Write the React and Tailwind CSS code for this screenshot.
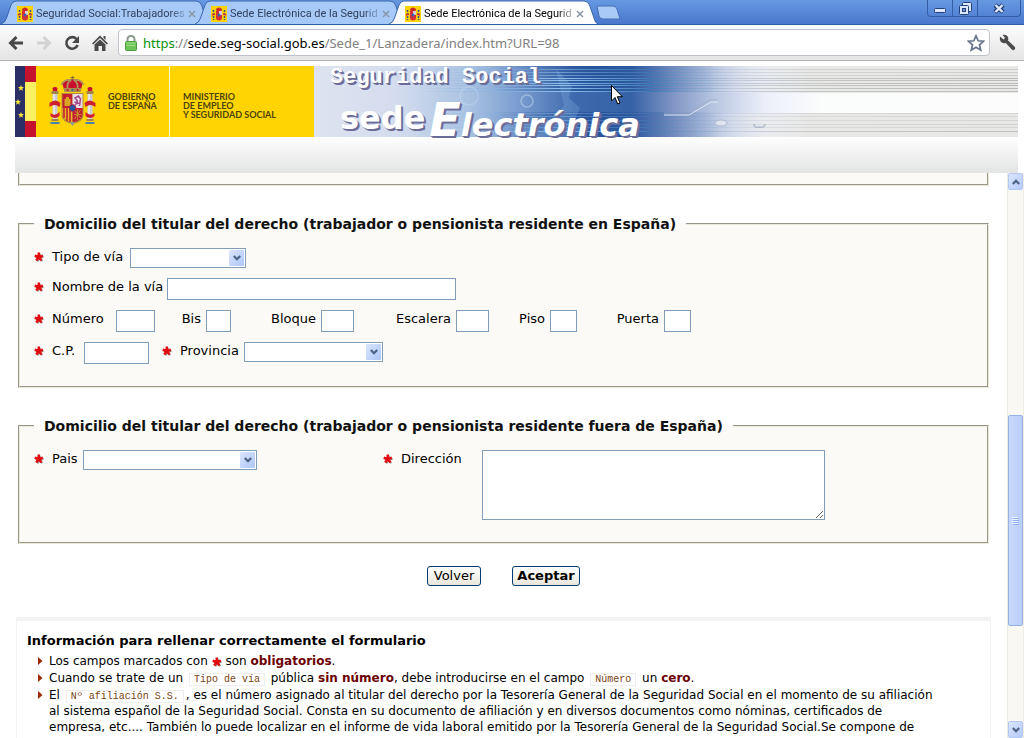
import React from "react";

const Crest = ({ className }) => (
  <svg viewBox="0 0 46 50" className={className} aria-hidden="true">
    <path d="M13 8 Q15 3 23 3 Q31 3 33 8 L31 15 H15 Z" fill="#c8102e" />
    <path d="M12 9 Q14 3 22 4 M34 9 Q32 3 24 4 M18 13 Q17 6 22 4 M28 13 Q29 6 24 4" fill="none" stroke="#b0935a" strokeWidth="1.8" />
    <path d="M14 12 H32 L31 16 H15 Z" fill="#a98a4f" />
    <path d="M23 0 V4 M21 1.6 H25" stroke="#8d7340" strokeWidth="1.2" />
    <circle cx="18" cy="14" r="1" fill="#c8102e" />
    <circle cx="23" cy="14" r="1" fill="#2b5fa8" />
    <circle cx="28" cy="14" r="1" fill="#c8102e" />
    <g>
      <path d="M3 18 H8 V44 H3 Z M38 18 H43 V44 H38 Z" fill="#c9ccd4" />
      <path d="M4.500 18 V44 M39.500 18 V44" stroke="#f4f4f6" strokeWidth="1.200" />
      <path d="M2 15 H9 V18 H2 Z M37 15 H44 V18 H37 Z M2 43 H9 V45 H2 Z M37 43 H44 V45 H37 Z" fill="#a58445" />
      <path d="M3 12 Q5.500 10 8 12 L7.500 15 H3.500 Z M38 12 Q40.500 10 43 12 L42.500 15 H38.500 Z" fill="#c8102e" />
      <path d="M1 46 H10 V48 H1 Z M36 46 H45 V48 H36 Z" fill="#4f7fae" />
      <path d="M0 27 Q6 22 11 27 L10 31 Q5 27 0 31 Z M46 27 Q40 22 35 27 L36 31 Q41 27 46 31 Z M1 37 Q5 41 10 36 L10 40 Q5 44 1 40 Z M45 37 Q41 41 36 36 L36 40 Q41 44 45 40 Z" fill="#d0202e" />
    </g>
    <path d="M12 17 H34 V39 Q34 46 23 48 Q12 46 12 39 Z" fill="#b48b3c" />
    <path d="M13 18 H23 V32 H13 Z" fill="#c41e32" />
    <path d="M15 30 V23 H16.500 V21 H19.500 V23 H21 V30 Z" fill="#d9a520" />
    <path d="M23 18 H33 V32 H23 Z" fill="#e6dfe6" />
    <path d="M26 29 L28 25 L25.500 22 L29 20 L31 23 L30 30 M25 26 L31 28" fill="none" stroke="#a5468c" strokeWidth="1.500" />
    <path d="M13 32 H23 V46.500 Q13 44.500 13 38 Z" fill="#e9bb1f" />
    <path d="M14.500 32 V42 M17.500 32 V45 M20.500 32 V46" stroke="#c41e32" strokeWidth="1.600" />
    <path d="M23 32 H33 V38 Q33 44.500 23 46.500 Z" fill="#c41e32" />
    <path d="M25 34 L31 42 M31 34 L25 43 M28 33 V44 M24.500 38.500 H32" stroke="#c99a2a" strokeWidth="0.800" />
    <circle cx="23" cy="32" r="3.400" fill="#2453a0" stroke="#c41e32" strokeWidth="0.900" />
    <path d="M20 46 H26 L23 50 Z" fill="#8f9c8a" />
  </svg>
);

const Favicon = () => (
  <svg viewBox="0 0 16 16" className="size-4 shrink-0" aria-hidden="true">
    <rect width="16" height="16" fill="#fdd306" />
    <path d="M5 3 Q8 0 11 3 L10.500 5 H5.500 Z" fill="#c8282e" />
    <path d="M5 5 H11 V12 Q11 14 8 14.500 Q5 14 5 12 Z" fill="#d4313a" />
    <path d="M8 5 H11 V9 H8 Z" fill="#d8cfd8" />
    <circle cx="8" cy="9" r="1.500" fill="#3a62a8" />
    <path d="M2.500 4 V14 M13.500 4 V14" stroke="#45507a" strokeWidth="1.500" strokeDasharray="2 1" />
    <path d="M1 9 L4 8 M12 8 L15 9" stroke="#d4313a" strokeWidth="1.500" />
  </svg>
);

function Tab({ title, active, last }) {
  return (
    <div className={`relative flex h-6 w-[209px] items-center pt-1 pr-[14px] pl-4 ${active ? "z-10" : ""} ${last ? "" : "-mr-[15px]"}`}>
      <svg viewBox="0 0 209 24" className="absolute inset-0 size-full" aria-hidden="true">
        <path
          d="M0 24 Q4 23 5.500 18 L10 5 Q11.500 1 15 1 H195 Q199 1 200.500 5 L205 18 Q206 23 209 24"
          fill={active ? "#fdfdfd" : "#a6c9f8"}
          stroke="#3a66ad"
          strokeWidth="1"
        />
      </svg>
      <button
        className={`relative flex min-w-0 grow items-center gap-[3px] font-['Roboto',sans-serif] text-[11px] leading-4 ${active ? "text-black" : "text-[#33415c]"}`}
      >
        <Favicon />
        <span className="whitespace-nowrap [mask-image:linear-gradient(to_right,black_90%,#0004)]">{title}</span>
      </button>
      <button aria-label="Cerrar pestaña" className="relative flex size-2 shrink-0 items-center justify-center">
        <svg viewBox="0 0 8 8" className="size-2" stroke="#8b97a8" strokeWidth="1.500" aria-hidden="true">
          <path d="M1 1 L7 7 M7 1 L1 7" />
        </svg>
      </button>
    </div>
  );
}

const Star = () => (
  <svg viewBox="0 0 10 10" className="inline-block h-[10px] w-[10px] shrink-0 align-middle" aria-hidden="true">
    <path d="M5.800 5.800 V1.800 M5.800 5.800 L9.500 4.800 M5.800 5.800 L8.200 9.300 M5.800 5.800 L3.300 9.300 M5.800 5.800 L1.800 4.800" stroke="#9a9a9a" strokeWidth="2" />
    <path d="M4.800 5 V0.600 M4.800 5 L8.900 3.700 M4.800 5 L7.400 8.600 M4.800 5 L2.200 8.600 M4.800 5 L0.700 3.700" stroke="#e3090f" strokeWidth="2.500" />
  </svg>
);

const Chevron = ({ up }) => (
  <svg viewBox="0 0 8 6" className="h-[6px] w-2" fill="none" stroke="#4d6185" strokeWidth="2.200" aria-hidden="true">
    <path d={up ? "M0.800 5 L4 1.800 L7.200 5" : "M0.800 1 L4 4.200 L7.200 1"} />
  </svg>
);

const boxStyle = "block border border-[#7f9db9] bg-white outline-none";

function Select({ id, width }) {
  return (
    <span className={`relative block h-5 ${width}`}>
      <select id={id} className={`${boxStyle} h-5 w-full appearance-none pr-5 pl-1`}>
        <option></option>
      </select>
      <span className="pointer-events-none absolute inset-y-[2px] right-[2px] flex w-[15px] items-center justify-center rounded-[1px] bg-linear-to-br from-[#dbe6fe] to-[#adc5f7]">
        <Chevron />
      </span>
    </span>
  );
}

const Req = () => (
  <span className="flex h-[18px] w-[18px] shrink-0 items-center">
    <Star />
  </span>
);

function Small({ id, label, gap, width }) {
  return (
    <div className="flex">
      <label htmlFor={id} className={`shrink-0 pr-[5px] text-right ${gap}`}>{label}</label>
      <input id={id} type="text" className={`${boxStyle} h-[22px] ${width}`} />
    </div>
  );
}

const fieldset =
  "mx-[2px] min-w-0 border-2 border-[#ece9d8] bg-[#fbfaf6] px-[14px] pt-4 pb-[22px] [border-style:groove]";

const legend = "px-[10px] text-[14px] leading-4 font-bold text-[#111]";

const Code = ({ children }) => (
  <code className="mx-[2px] inline-block border border-[#eeeeee] px-1 font-['Liberation_Mono',monospace] text-[10px] leading-[11px] text-[#7a4311]">{children}</code>
);

const Strong = ({ children }) => <strong className="text-[#6b0000]">{children}</strong>;

function Item({ children }) {
  return (
    <li className="flex gap-[6px]">
      <svg viewBox="0 0 5 8" className="mt-1 h-2 w-[5px] shrink-0" fill="#9c2a00" aria-hidden="true">
        <path d="M0 0 L4.500 4 L0 8 Z" />
      </svg>
      <span className="min-w-0 grow">{children}</span>
    </li>
  );
}

const darkLines = [3, 6, 9, 12, 14, 17, 19, 22, 25];
const lowLines = [47, 50, 54, 58, 61, 65];

function BannerArt() {
  return (
    <svg viewBox="0 0 704 71" preserveAspectRatio="xMinYMid slice" className="absolute inset-0 size-full" aria-hidden="true">
      <defs>
        <linearGradient id="sky">
          <stop offset="0" stopColor="#dfe3f0" />
          <stop offset="0.120" stopColor="#d3dcee" />
          <stop offset="0.220" stopColor="#a9c2e2" />
          <stop offset="0.300" stopColor="#7397cc" />
          <stop offset="0.370" stopColor="#3e69ad" />
          <stop offset="0.450" stopColor="#3561a6" />
          <stop offset="0.510" stopColor="#7f95c4" />
          <stop offset="0.570" stopColor="#b9c7e2" />
          <stop offset="0.640" stopColor="#eceffa" />
          <stop offset="0.720" stopColor="#fbfcfc" />
          <stop offset="1" stopColor="#fbfcfb" />
        </linearGradient>
        <linearGradient id="line">
          <stop offset="0.150" stopColor="#7ba9d8" stopOpacity="0" />
          <stop offset="0.350" stopColor="#8fc4ec" />
          <stop offset="0.480" stopColor="#3a78b4" />
          <stop offset="0.600" stopColor="#c3cbe0" />
          <stop offset="0.720" stopColor="#c4c6c4" />
          <stop offset="1" stopColor="#b9bbb9" />
        </linearGradient>
        <linearGradient id="shade">
          <stop offset="0.250" stopColor="#1f4690" stopOpacity="0" />
          <stop offset="0.400" stopColor="#17408c" stopOpacity="0.500" />
          <stop offset="0.480" stopColor="#1f4690" stopOpacity="0.200" />
          <stop offset="0.580" stopColor="#1f4690" stopOpacity="0" />
        </linearGradient>
        <linearGradient id="grey">
          <stop offset="0.560" stopColor="#e6e7e6" stopOpacity="0" />
          <stop offset="0.700" stopColor="#e8e9e7" />
          <stop offset="1" stopColor="#e8e9e7" />
        </linearGradient>
      </defs>
      <rect width="704" height="71" fill="url(#sky)" />
      <rect width="704" height="27" fill="url(#grey)" />
      <rect y="47" width="704" height="24" fill="url(#grey)" />
      <rect width="704" height="26" fill="url(#shade)" />
      <rect y="46" width="704" height="25" fill="url(#shade)" />
      {darkLines.map((y) => (
        <rect key={y} y={y} width="704" height="1" fill="url(#line)" opacity={y > 10 ? 1 : 0.600} />
      ))}
      {lowLines.map((y) => (
        <rect key={y} y={y} width="704" height="1" fill="url(#line)" opacity={y > 62 ? 0.900 : 0.450} />
      ))}
      <path d="M242 3 L258 20 L255 32 L266 42 L260 55 L272 71 L222 71 L250 40 Z" fill="#8dbce6" opacity="0.250" />
      <circle cx="213" cy="35" r="6" fill="none" stroke="#d5e3f2" strokeWidth="1.500" opacity="0.450" />
      <circle cx="155" cy="30" r="9" fill="none" stroke="#d5e3f2" strokeWidth="1.500" opacity="0.300" />
      <path d="M350 47 H373 L396 34 H404" fill="none" stroke="#9aa8c8" strokeWidth="1.200" opacity="0.600" />
      <path d="M350 49 H375 L397 36 H404" fill="none" stroke="#dfe6f4" strokeWidth="1" />
      <ellipse cx="407" cy="57" rx="6" ry="3" fill="#e7ebf4" stroke="#a9b2c8" opacity="0.800" />
      <path d="M440 58 Q440 62 445 61 Q451 62 451 58" fill="none" stroke="#a9b2c8" strokeWidth="1.500" opacity="0.800" />
    </svg>
  );
}

const EuStar = ({ x, y }) => (
  <path
    transform={`translate(${x} ${y})`}
    d="M0 -3 L0.900 -0.900 L3 -0.900 L1.300 0.500 L1.900 2.700 L0 1.400 L-1.900 2.700 L-1.300 0.500 L-3 -0.900 L-0.900 -0.900 Z"
    fill="#f6e63c"
  />
);

const titleShadow = "text-white [text-shadow:1px_1px_0_#6b6c98,2px_2px_0_#6b6c98]";

export default function App() {
  return (
    <div className="flex h-screen flex-col overflow-hidden bg-white font-['DejaVu_Sans',sans-serif] text-[13px] leading-4 text-black">
      <header className="shrink-0">
        <div className="flex h-[25px] items-start border-b border-[#2f5aa5] bg-linear-to-b from-[#6799e2] to-[#4a77cc]">
          <nav className="flex pl-px" aria-label="Pestañas">
            <Tab title="Seguridad Social:Trabajadores" />
            <Tab title="Sede Electrónica de la Segurid" />
            <Tab title="Sede Electrónica de la Segurid" active last />
          </nav>
          <button aria-label="Nueva pestaña" className="-ml-[2px] pt-[5px]">
            <svg viewBox="0 0 25 15" className="h-[15px] w-[25px]" aria-hidden="true">
              <path d="M1 1 H17 Q20 1 21 4 L24 14 H7 Q4 14 3 11 Z" fill="#a9c9f6" stroke="#4470b8" />
            </svg>
          </button>
          <div className="mr-[3px] ml-auto flex h-[17px] divide-x divide-[#345da6] rounded-b-[4px] border border-t-0 border-[#345da6]">
            <button aria-label="Minimizar" className="flex w-[25px] items-end justify-center pb-[3px]">
              <svg viewBox="0 0 12 5" className="h-[5px] w-3" aria-hidden="true"><rect x="0.500" y="0.500" width="11" height="4" rx="1" fill="#dce8fb" stroke="#24407a" /></svg>
            </button>
            <button aria-label="Restaurar" className="flex w-[25px] items-center justify-center">
              <svg viewBox="0 0 13 13" className="size-[13px]" aria-hidden="true">
                <rect x="3.500" y="0.500" width="9" height="9" rx="1" fill="#dce8fb" stroke="#24407a" />
                <rect x="0.500" y="3.500" width="9" height="9" rx="1" fill="#dce8fb" stroke="#24407a" />
                <rect x="3.500" y="6.500" width="3" height="3" fill="#6f97da" stroke="#24407a" />
              </svg>
            </button>
            <button aria-label="Cerrar" className="flex w-[42px] items-center justify-center">
              <svg viewBox="0 0 12 11" className="h-[11px] w-3" aria-hidden="true">
                <path d="M2 2 L10 9 M10 2 L2 9" stroke="#24407a" strokeWidth="4.500" />
                <path d="M2.500 2 L9.500 9 M9.500 2 L2.500 9" stroke="#dce8fb" strokeWidth="2.400" />
              </svg>
            </button>
          </div>
        </div>

        <div className="flex h-9 items-center border-b border-[#b4b4b4] bg-linear-to-b from-[#fdfdfd] to-[#e4e4e4] pr-2 pl-2">
          <button aria-label="Atrás" className="w-7">
            <svg viewBox="0 0 16 14" className="h-[14px] w-4" fill="none" stroke="#484848" strokeWidth="3" aria-hidden="true"><path d="M15 7 H3 M8.500 1 L2.500 7 L8.500 13" /></svg>
          </button>
          <button aria-label="Adelante" className="w-7">
            <svg viewBox="0 0 16 14" className="h-[14px] w-4" fill="none" stroke="#d2d2d2" strokeWidth="3" aria-hidden="true"><path d="M1 7 H13 M7.500 1 L13.500 7 L7.500 13" /></svg>
          </button>
          <button aria-label="Recargar" className="w-7">
            <svg viewBox="0 0 16 16" className="size-4" aria-hidden="true">
              <path d="M12.500 4 A5.800 5.800 0 1 0 13.600 10" fill="none" stroke="#484848" strokeWidth="2.600" />
              <path d="M15 1 V8 H8 Z" fill="#484848" />
            </svg>
          </button>
          <button aria-label="Inicio" className="w-[26px]">
            <svg viewBox="0 0 16 16" className="size-4" fill="#484848" aria-hidden="true">
              <path d="M8 0.500 L16 8.500 L14.800 9.500 L8 3 L1.200 9.500 L0 8.500 Z" />
              <path d="M8 4.500 L13.500 9.500 V16 H10 V11 H6.500 V16 H2.500 V9.500 Z M11.500 1 H13.500 V5 L11.500 3 Z" />
            </svg>
          </button>
          <div className="flex h-[27px] min-w-0 grow items-center rounded-[4px] border border-[#bfc2c8] bg-white pr-1 pl-[6px]">
            <svg viewBox="0 0 12 16" className="h-4 w-3 shrink-0" aria-hidden="true">
              <path d="M2.500 8 V4.500 Q2.500 1 6 1 Q9.500 1 9.500 4.500 V8" fill="none" stroke="#8f9a8f" strokeWidth="2" />
              <rect x="0.500" y="6.500" width="11" height="9" rx="1" fill="#6cc454" stroke="#4c9c3c" />
              <path d="M1.500 8 H10.500 M1.500 10.500 H10.500" stroke="#a5e08e" />
            </svg>
            <p className="ml-[6px] grow truncate font-['Noto_Sans',sans-serif] text-[13px] leading-5 text-[#808080]">
              <span className="text-[#0b8f0b]">https</span>://<span className="text-black">sede.seg-social.gob.es</span>/Sede_1/Lanzadera/index.htm?URL=98
            </p>
            <button aria-label="Marcador">
              <svg viewBox="0 0 18 18" className="size-[18px]" fill="#fff" stroke="#66738c" strokeWidth="1.700" aria-hidden="true">
                <path d="M9 1.800 L11.200 6.800 L16.500 7.200 L12.500 10.800 L13.700 16 L9 13.200 L4.300 16 L5.500 10.800 L1.500 7.200 L6.800 6.800 Z" />
              </svg>
            </button>
          </div>
          <button aria-label="Herramientas" className="ml-[9px]">
            <svg viewBox="0 0 17 17" className="size-[17px]" aria-hidden="true">
              <path d="M1 2.500 L4.500 5.500 L6 4 L3.500 0.800 Q7.500 0 9 3 Q9.700 5 9 6.500 L16 13 Q17 15 15 16 Q14 16.500 13 15.800 L6.800 9 Q3.500 9.800 1.600 7.500 Q0.300 5.500 1 2.500 Z" fill="#4c4c4c" />
            </svg>
          </button>
        </div>
      </header>

      <section className="shrink-0 pt-[5px] pr-[6px] pl-[15px]">
        <div className="flex h-[71px]">
          <svg viewBox="0 0 21 71" className="h-full w-[21px] shrink-0" aria-hidden="true">
            <rect width="10" height="71" fill="#2c2f66" />
            <rect x="10" width="11" height="71" fill="#c4122f" />
            <rect x="10" y="16" width="11" height="39" fill="#fbf061" />
            <EuStar x={6} y={22} />
            <EuStar x={3} y={36} />
            <EuStar x={6} y={49} />
          </svg>
          <div className="flex w-[278px] shrink-0 bg-[#ffd400] font-['Lato',sans-serif] text-[9px] leading-[9px] font-bold text-[#4d430a]">
            <div className="flex w-[134px] border-r border-[#fff7cc] pl-[13px]">
              <Crest className="mt-[10px] h-[50px] w-[47px] shrink-0" />
              <p className="mt-[26px] ml-3 whitespace-nowrap">GOBIERNO<br />DE ESPAÑA</p>
            </div>
            <p className="mt-[26px] ml-[13px] whitespace-nowrap">MINISTERIO<br />DE EMPLEO<br />Y SEGURIDAD SOCIAL</p>
          </div>
          <div className="relative min-w-0 grow">
            <BannerArt />
            <p className={`absolute top-0 left-4 font-['Liberation_Mono',monospace] text-[22px] leading-6 font-bold whitespace-nowrap ${titleShadow}`}>Seguridad Social</p>
            <h1 className={`absolute top-[32px] left-[26px] flex gap-1 font-bold whitespace-nowrap ${titleShadow}`}>
              <span className="text-[32px] leading-[40px]">sede</span>
              <span className="flex items-baseline italic">
                <span className="text-[46px] leading-[44px]">E</span>
                <span className="text-[32px] leading-[44px]">lectrónica</span>
              </span>
            </h1>
            <svg viewBox="0 0 12 20" className="absolute top-[19px] left-[297px] h-5 w-3" aria-hidden="true">
              <path d="M0.500 0.500 V16 L4 12.500 L6.700 19 L9 18 L6.300 11.700 H11.300 Z" fill="#fff" stroke="#000" />
            </svg>
          </div>
        </div>
        <div className="h-9 bg-linear-to-b from-[#fdfefd] to-[#e3e4e4]" />
      </section>

      <div className="flex min-h-0 grow">
        <main className="min-w-0 grow overflow-hidden px-4">
          <div className="mx-[2px] h-[13px] border-2 border-t-0 border-[#ece9d8] bg-[#fbfaf6] [border-style:groove]" />

          <form onSubmit={(e) => e.preventDefault()}>
            <fieldset className={`mt-[30px] ${fieldset}`}>
              <legend className={legend}>
                Domicilio del titular del derecho (trabajador o pensionista residente en España)
              </legend>
              <div className="flex flex-col gap-[10px] leading-[18px]">
                <div className="flex">
                  <Req />
                  <label htmlFor="tipo" className="w-[78px]">Tipo de vía</label>
                  <Select id="tipo" width="w-[116px]" />
                </div>
                <div className="flex">
                  <Req />
                  <label htmlFor="nombre" className="w-[115px]">Nombre de la vía</label>
                  <input id="nombre" type="text" className={`${boxStyle} h-[22px] w-[289px]`} />
                </div>
                <div className="flex">
                  <Req />
                  <label htmlFor="numero" className="w-[64px]">Número</label>
                  <input id="numero" type="text" className={`${boxStyle} h-[22px] w-[39px]`} />
                  <Small id="bis" label="Bis" gap="w-[51px]" width="w-[25px]" />
                  <Small id="bloque" label="Bloque" gap="w-[90px]" width="w-[33px]" />
                  <Small id="escalera" label="Escalera" gap="w-[102px]" width="w-[33px]" />
                  <Small id="piso" label="Piso" gap="w-[61px]" width="w-[27px]" />
                  <Small id="puerta" label="Puerta" gap="w-[87px]" width="w-[27px]" />
                </div>
                <div className="flex">
                  <Req />
                  <label htmlFor="cp" className="w-8">C.P.</label>
                  <input id="cp" type="text" className={`${boxStyle} mr-[13px] h-[22px] w-[65px]`} />
                  <Req />
                  <label htmlFor="provincia" className="w-[64px]">Provincia</label>
                  <Select id="provincia" width="w-[139px]" />
                </div>
              </div>
            </fieldset>

            <fieldset className={`mt-[30px] ${fieldset}`}>
              <legend className={legend}>
                Domicilio del titular del derecho (trabajador o pensionista residente fuera de España)
              </legend>
              <div className="flex leading-[18px]">
                <Req />
                <label htmlFor="pais" className="w-[31px]">Pais</label>
                <Select id="pais" width="w-[174px] mr-[126px]" />
                <Req />
                <label htmlFor="direccion" className="w-[81px]">Dirección</label>
                <textarea id="direccion" className={`${boxStyle} h-[70px] w-[343px] resize`} />
              </div>
            </fieldset>

            <div className="flex justify-center gap-[31px] pt-[22px]">
              <button type="button" className="flex h-5 w-[54px] items-center justify-center rounded-[3px] border border-[#003c74] bg-linear-to-b from-white to-[#e9e7dc]">Volver</button>
              <button type="submit" className="flex h-5 w-[68px] items-center justify-center rounded-[3px] border border-[#003c74] bg-linear-to-b from-white to-[#e9e7dc] font-bold">Aceptar</button>
            </div>
          </form>

          <section className="mt-[31px] h-[300px] border border-t-4 border-[#f3f3f3] pt-3 pr-[18px] pl-[10px]">
            <h2 className="font-bold">Información para rellenar correctamente el formulario</h2>
            <ul className="mt-1 flex flex-col gap-px pl-[11px] text-[12px] leading-4">
              <Item>
                Los campos marcados con <Star /> son <Strong>obligatorios</Strong>.
              </Item>
              <Item>
                Cuando se trate de un <Code>Tipo de vía</Code> pública <Strong>sin número</Strong>, debe introducirse en el campo <Code>Número</Code> un <Strong>cero</Strong>.
              </Item>
              <Item>
                El <Code>Nº afiliación S.S.</Code>, es el número asignado al titular del derecho por la Tesorería General de la Seguridad Social en el momento de su afiliación<br />
                al sistema español de la Seguridad Social. Consta en su documento de afiliación y en diversos documentos como nóminas, certificados de<br />
                empresa, etc.... También lo puede localizar en el informe de vida laboral emitido por la Tesorería General de la Seguridad Social.Se compone de
              </Item>
            </ul>
          </section>
        </main>

        <div className="flex w-[17px] shrink-0 flex-col border-x border-[#eeede5] bg-[#f9f8f2]" aria-hidden="true">
          <div className="flex h-[17px] items-center justify-center rounded-[2px] border border-[#b4c8f6] bg-linear-to-br from-[#dbe6fe] to-[#b5caf9]"><Chevron up /></div>
          <div className="grow-[226] basis-0" />
          <div className="flex grow-[210] basis-0 items-center justify-center rounded-[2px] border border-[#98b1e4] bg-linear-to-r from-[#c9d8fc] to-[#b9cefb]">
            <svg viewBox="0 0 7 8" className="h-2 w-[7px]"><path d="M0 0.500 H6 M0 2.500 H6 M0 4.500 H6 M0 6.500 H6" stroke="#eef4fe" /><path d="M1 1.500 H7 M1 3.500 H7 M1 5.500 H7 M1 7.500 H7" stroke="#8cb0f8" /></svg>
          </div>
          <div className="grow-[95] basis-0" />
          <div className="flex h-[17px] items-center justify-center rounded-[2px] border border-[#b4c8f6] bg-linear-to-br from-[#dbe6fe] to-[#b5caf9]"><Chevron /></div>
        </div>
      </div>
    </div>
  );
}
